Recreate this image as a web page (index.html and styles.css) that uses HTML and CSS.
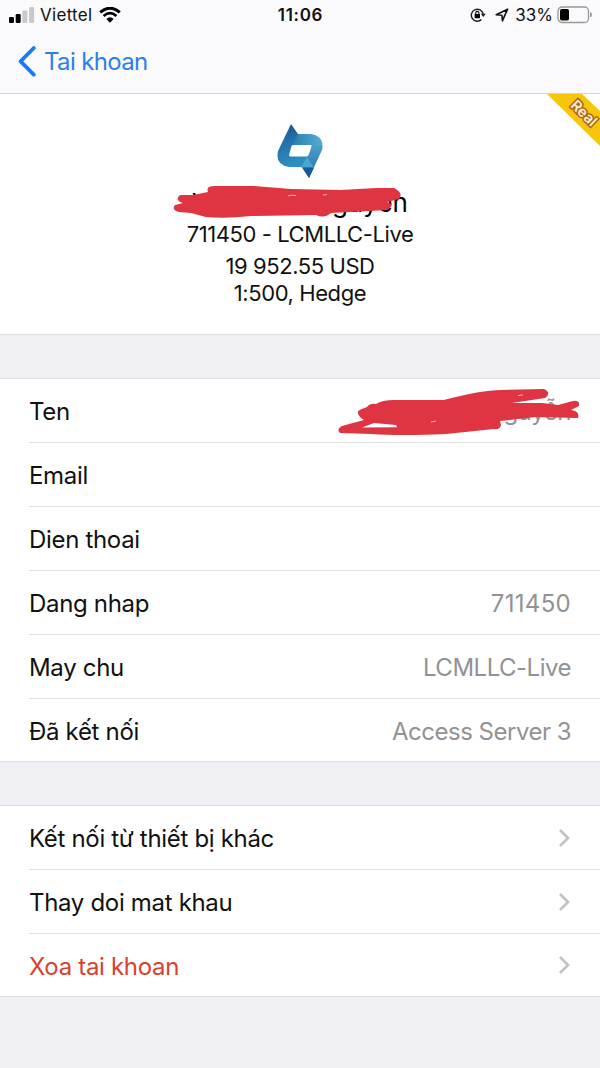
FILE: index.html
```html
<!DOCTYPE html>
<html lang="vi">
<head>
    <meta charset="utf-8">
    <meta name="viewport" content="width=device-width, initial-scale=1.0">
    <title>Tai khoan</title>
    <link rel="stylesheet" href="styles.css">
</head>
<body>
<header class="topbar">
    <div class="status">
        <div class="status-left">
            <svg class="signal" width="26" height="16" viewBox="0 0 26 16">
                <rect x="0" y="10" width="5" height="6" rx="1.3"/>
                <rect x="6.7" y="7" width="5" height="9" rx="1.3"/>
                <rect class="off" x="13.4" y="3.5" width="5" height="12.5" rx="1.3"/>
                <rect class="off" x="20.1" y="0" width="5" height="16" rx="1.3"/>
            </svg>
            <span class="carrier">Viettel</span>
            <svg width="22" height="16" viewBox="0 0 22 16">
                <path d="M1.2 5.4 Q11 -3 20.8 5.4" fill="none" stroke="#000" stroke-width="3"/>
                <path d="M4.6 9 Q11 3.4 17.4 9" fill="none" stroke="#000" stroke-width="2.7"/>
                <path d="M7.4 12 Q11 8.6 14.6 12 L11 15.8Z"/>
            </svg>
        </div>
        <div class="clock">11:06</div>
        <div class="status-right">
            <svg width="16" height="16" viewBox="0 0 16 16">
                <path d="M11.4 12.6 A6 6 0 1 1 13.2 7" fill="none" stroke="#222" stroke-width="1.5"/>
                <path d="M10.8 6.8h5l-2.5 3.2z" fill="#222"/>
                <rect x="4.6" y="7" width="5.4" height="4.2" rx=".6"/>
                <path d="M5.7 7.2V6a1.6 1.6 0 0 1 3.2 0v1.2" fill="none" stroke="#000" stroke-width="1.1"/>
            </svg>
            <svg class="arrow" width="14" height="14" viewBox="0 0 14 14">
                <path d="M1.2 6.8 L12.6 1.2 L7.4 12.8 L6.9 7.2Z" fill="none" stroke="#111" stroke-width="1.6" stroke-linejoin="round"/>
            </svg>
            <span class="percent">33%</span>
            <svg class="battery" width="36" height="18" viewBox="0 0 36 18">
                <rect x="1" y="1" width="30.5" height="15.5" rx="4" fill="none" stroke="#999" stroke-width="1.3"/>
                <rect x="3" y="3" width="9" height="11.5" rx="1.8"/>
                <path d="M33 6q2 .8 2 2.8t-2 2.8z" fill="#999"/>
            </svg>
        </div>
    </div>
    <a class="back">
        <svg width="18" height="31" viewBox="0 0 18 31">
            <path d="M15.8 2 L2.6 15.3 L15.8 28.6" fill="none" stroke="#1a7af5" stroke-width="3.8" stroke-linecap="round" stroke-linejoin="round"/>
        </svg>
        <span>Tai khoan</span>
    </a>
</header>

<section class="account">
    <svg class="ribbon" width="56" height="54" viewBox="0 0 56 54">
        <path d="M3 0H38L56 17V52Z" fill="#f7c60b"/>
        <text x="40" y="24" transform="rotate(44 40 19)" text-anchor="middle">Real</text>
    </svg>
    <svg class="logo" width="48" height="56" viewBox="0 0 48 56">
        <defs>
            <linearGradient id="gl" x1="0" y1="0" x2="0.3" y2="1">
                <stop offset="0" stop-color="#184f86"/>
                <stop offset="0.5" stop-color="#2474ac"/>
                <stop offset="1" stop-color="#2f8fc0"/>
            </linearGradient>
            <linearGradient id="gr" x1="0" y1="0" x2="1" y2="0">
                <stop offset="0" stop-color="#2878ae"/>
                <stop offset="1" stop-color="#55aed5"/>
            </linearGradient>
            <linearGradient id="gd" x1="0" y1="0" x2="0" y2="1">
                <stop offset="0" stop-color="#58afd5"/>
                <stop offset="1" stop-color="#2471ab"/>
            </linearGradient>
        </defs>
        <path d="M34 11 Q49 13 46 27 L33 55 L26 44 L32 30 L36 20Z" fill="url(#gd)"/>
        <path d="M20 11 H34 Q45 12.5 46 22 H14Z" fill="url(#gr)"/>
        <path d="M15 1 L22 11 L16 24 L14 33 H33 V44 H13 Q-1 42 2 28Z" fill="url(#gl)"/>
        <path d="M17 22 H34.5 Q36 22 35.5 23.5 L32.6 32 Q32 33.5 30.5 33.5 H14.5 Q12.6 33.5 13.2 31.5 L15.4 23.5 Q15.8 22 17 22Z" fill="#fff"/>
        <path d="M31 34 L25 44.5 H38Z" fill="#4ba5d1"/>
        <path d="M26 44.5 H38 L33 55Z" fill="#195b98"/>
    </svg>
    <div class="holder"><span>V</span><span>Nguyễn</span></div>
    <svg class="scribble-top" width="236" height="40" viewBox="0 0 236 40">
        <path d="M37 7 C35 2 39 1 45 1 L83 1 L120 4 L170 5 L205 3 L223 3 Q233 8 228 14 L216 17 Q225 20 216 25 L160 28 Q153 34 145 30 L80 31 Q55 34 35 32 L20 28 L8 27 Q0 25 4 20 L12 18 Q3 15 9 10 L22 10 L32 8Z" fill="#df3441"/>
        <path d="M117 11q4-1.4 8-.4M152 10l4-.5" stroke="#f5b9be" stroke-width="1" fill="none"/>
    </svg>
    <div class="login">711450 - LCMLLC-Live</div>
    <div class="balance">19 952.55 USD</div>
    <div class="leverage">1:500, Hedge</div>
</section>

<section class="list">
    <div class="row">
        <span class="label">Ten</span>
        <span class="value">Nguyễn</span>
        <svg class="scribble-row" width="246" height="50" viewBox="0 0 246 50">
            <path d="M4 44 Q0 40 6 37 L28 31 Q21 27 22 22 Q25 20 31 18 Q34 14 40 15 Q46 11 58 11 L108 11 Q145 1 165 1 L208 0 Q216 4 209 9 L176 14 L206 14 L222 16 L237 12 Q244 11 243 17 L235 21 Q244 22 242 29 L200 28 L164 32 L165 36 Q164 41 158 40 L110 45 Q65 47 35 45Z" fill="#df3441"/>
            <path d="M26 38.5 L38 34 L60 36 L61 38.2Z" fill="#fff"/>
            <path d="M95 33l5-1M182 6.5l5-.6" stroke="#f5b9be" stroke-width="1"/>
        </svg>
    </div>
    <div class="row"><span class="label">Email</span></div>
    <div class="row"><span class="label">Dien thoai</span></div>
    <div class="row"><span class="label">Dang nhap</span><span class="value number">711450</span></div>
    <div class="row"><span class="label">May chu</span><span class="value">LCMLLC-Live</span></div>
    <div class="row"><span class="label">Đã kết nối</span><span class="value">Access Server 3</span></div>
</section>

<section class="list">
    <div class="row">
        <span class="label">Kết nối từ thiết bị khác</span>
        <svg class="chevron" width="12" height="20" viewBox="0 0 12 20"><path d="M1 2l8 8-8 8"/></svg>
    </div>
    <div class="row">
        <span class="label">Thay doi mat khau</span>
        <svg class="chevron" width="12" height="20" viewBox="0 0 12 20"><path d="M1 2l8 8-8 8"/></svg>
    </div>
    <div class="row">
        <span class="label danger">Xoa tai khoan</span>
        <svg class="chevron" width="12" height="20" viewBox="0 0 12 20"><path d="M1 2l8 8-8 8"/></svg>
    </div>
</section>
</body>
</html>
```

FILE: styles.css
```css
* {
    box-sizing: border-box;
}

body {
    margin: 0;
    background: #efeff4;
    color: #111;
    font-family: Inter, "Liberation Sans", sans-serif;
    font-size: 24px;
}

svg {
    display: block;
    flex: none;
}

.topbar {
    height: 94px;
    background: #fafafc;
    border-bottom: 1px solid #d5d5d8;
}

.status {
    display: grid;
    grid-template-columns: 1fr auto 1fr;
    align-items: center;
    height: 30px;
    padding: 0 7px 0 9px;
    font-size: 17px;
}

.status-left,
.status-right {
    display: flex;
    align-items: center;
}

.status-right {
    justify-content: flex-end;
}

.off {
    fill: #c8c8ca;
}

.carrier {
    margin: 0 7px 0 5px;
    letter-spacing: 0.3px;
}

.clock {
    padding-right: 1px;
    font-weight: 600;
    letter-spacing: 0.7px;
}

.arrow {
    margin: 0 6px 0 9px;
}

.percent {
    margin-right: 4px;
}

.back {
    display: flex;
    align-items: center;
    gap: 8px;
    height: 63px;
    padding-left: 18px;
    color: #2d7fe8;
    letter-spacing: -0.65px;
}

.account {
    position: relative;
    height: 241px;
    padding-top: 29px;
    background: #fff;
    border-bottom: 1px solid #dedee2;
    text-align: center;
}

.ribbon {
    position: absolute;
    top: 0;
    right: 0;
}

.ribbon text {
    font-size: 14.5px;
    font-weight: 600;
    fill: #fff3d0;
    stroke: #b0641c;
    stroke-width: 3px;
    paint-order: stroke;
}

.logo {
    margin: 0 auto;
}

.holder {
    display: flex;
    justify-content: space-between;
    width: 216px;
    height: 40px;
    margin: 0 auto;
    padding-top: 6px;
    font-size: 26px;
    line-height: 36px;
    color: #000;
}

.scribble-top {
    position: absolute;
    top: 91px;
    left: 171px;
}

.login,
.balance,
.leverage {
    height: 30px;
    font-size: 22px;
    line-height: 30px;
    letter-spacing: -0.42px;
}

.balance {
    margin-top: 2px;
}

.leverage {
    margin-top: -3px;
}

.list {
    margin-top: 43px;
    background: #fff;
    border-top: 1px solid #dedee2;
    border-bottom: 1px solid #dedee2;
}

.row {
    position: relative;
    display: flex;
    align-items: center;
    justify-content: space-between;
    height: 64px;
    margin-left: 29px;
    padding: 2px 29px 0 0;
    border-bottom: 1px solid #e0e0e3;
}

.row:last-child {
    height: 62px;
    border-bottom: 0;
}

.label {
    letter-spacing: -0.32px;
}

.value {
    margin-left: auto;
    color: #929295;
    letter-spacing: -0.5px;
}

.number {
    letter-spacing: 0.3px;
}

.scribble-row {
    position: absolute;
    top: 10px;
    right: 18px;
}

.danger {
    color: #d8402f;
}

.chevron {
    margin-top: -2px;
}

.chevron path {
    fill: none;
    stroke: #c2c2c6;
    stroke-width: 2.6;
}
```
